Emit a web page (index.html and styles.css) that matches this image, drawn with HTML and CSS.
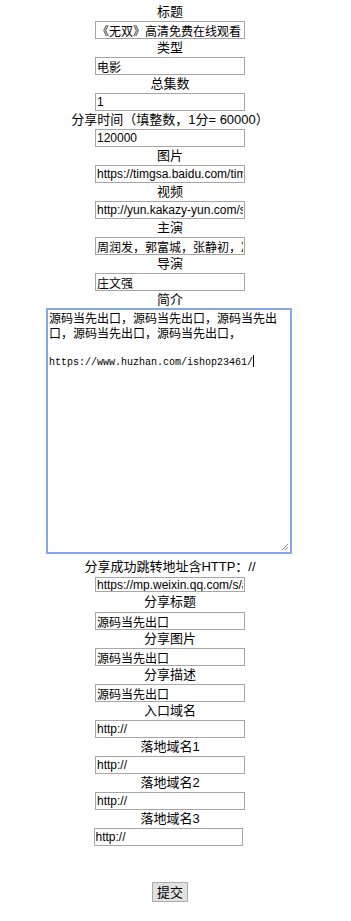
FILE: index.html
```html
<!DOCTYPE html>
<html lang="zh-CN">
<head>
    <meta charset="UTF-8">
    <meta name="viewport" content="width=device-width, initial-scale=1.0">
    <title>添加</title>
    <link rel="stylesheet" href="styles.css">
</head>
<body>
    <form class="edit-form" onsubmit="return false;">
        <div class="label">标题</div>
        <input class="field" type="text" value="《无双》高清免费在线观看">
        <div class="label">类型</div>
        <input class="field" type="text" value="电影">
        <div class="label">总集数</div>
        <input class="field" type="text" value="1">
        <div class="label">分享时间（填整数，1分= 60000）</div>
        <input class="field" type="text" value="120000">
        <div class="label">图片</div>
        <input class="field" type="text" value="https://timgsa.baidu.com/timg?image">
        <div class="label">视频</div>
        <input class="field" type="text" value="http://yun.kakazy-yun.com/share/">
        <div class="label">主演</div>
        <input class="field" type="text" value="周润发，郭富城，张静初，冯文娟">
        <div class="label">导演</div>
        <input class="field" type="text" value="庄文强">
        <div class="label label-short">简介</div>
        <div class="intro-box">
            <div class="intro-cn">源码当先出口，源码当先出口，源码当先出口，源码当先出口，源码当先出口，</div>
            <div class="intro-blank"></div>
            <div class="intro-url">https://www.huzhan.com/ishop23461/<span class="caret"></span></div>
            <svg class="grip" width="10" height="10" viewBox="0 0 10 10">
                <path d="M9 3 L3 9 M9 6 L6 9" stroke="#8a8a8a" stroke-width="1" fill="none"/>
            </svg>
        </div>
        <div class="label label-tall label-gap">分享成功跳转地址含HTTP：//</div>
        <input class="field field-thin" type="text" value="https://mp.weixin.qq.com/s/abc">
        <div class="label label-tall">分享标题</div>
        <input class="field" type="text" value="源码当先出口">
        <div class="label">分享图片</div>
        <input class="field" type="text" value="源码当先出口">
        <div class="label">分享描述</div>
        <input class="field" type="text" value="源码当先出口">
        <div class="label">入口域名</div>
        <input class="field" type="text" value="http://">
        <div class="label">落地域名1</div>
        <input class="field" type="text" value="http://">
        <div class="label">落地域名2</div>
        <input class="field" type="text" value="http://">
        <div class="label">落地域名3</div>
        <input class="field field-last" type="text" value="http://">
        <button class="submit-btn" type="submit">提交</button>
    </form>
</body>
</html>
```

FILE: styles.css
```css
* {margin:0;padding:0;box-sizing:border-box;}
body {background:#fff;color:#000;font-family:"Liberation Sans","Noto Sans CJK SC",sans-serif;font-size:13px;}
.edit-form {width:340px;display:flex;flex-direction:column;align-items:center;padding-top:3px;}
.label {height:18px;line-height:18px;text-align:center;white-space:nowrap;}
.label-short {height:17px;line-height:17px;}
.label-tall {height:20px;line-height:20px;}
.label-gap {margin-top:3px;}
.field {width:150px;height:18px;border:1px solid #a6a6a6;padding:0 1px;font-family:"Liberation Sans","Noto Sans CJK SC",sans-serif;font-size:12px;line-height:16px;color:#000;background:#fff;outline:none;}
.field-thin {height:15px;line-height:13px;}
.field-last {width:149px;margin-right:4px;}
.intro-box {position:relative;width:246px;height:246px;margin-right:2px;border:2px solid #86a7ea;padding:0 3px 0 1px;font-size:12px;line-height:15px;overflow:hidden;}
.intro-cn {font-family:"Noto Sans CJK SC",sans-serif;}
.intro-blank {height:15px;}
.intro-url {font-family:"Liberation Mono",monospace;font-size:10px;line-height:15px;white-space:nowrap;}
.caret {display:inline-block;width:1px;height:12px;background:#000;vertical-align:-2px;}
.grip {position:absolute;right:1px;bottom:1px;}
.submit-btn {margin-top:36px;width:36px;height:20px;border:1px solid #adadad;background:#e1e1e1;font-family:"Noto Sans CJK SC",sans-serif;font-size:13px;line-height:18px;color:#000;}
```
